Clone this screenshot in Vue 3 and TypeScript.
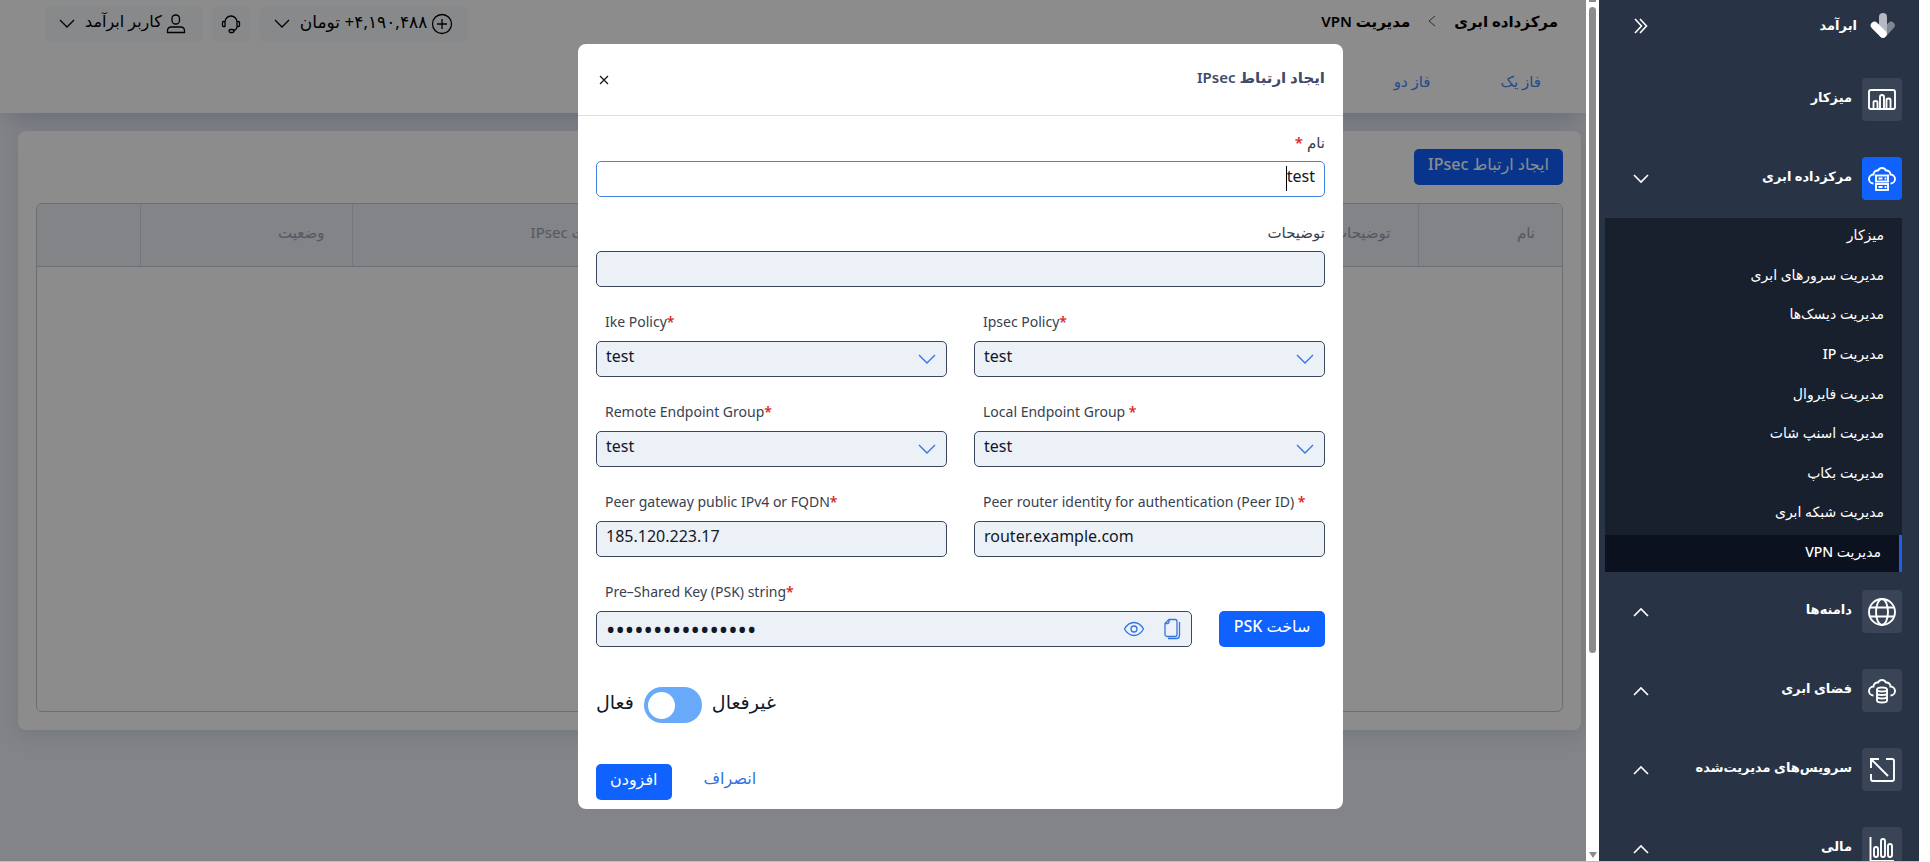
<script setup lang="ts">
import { ref } from 'vue'

type IconName = 'desk' | 'cloudServer' | 'globe' | 'cloudStorage' | 'managed' | 'finance'

interface MenuItem {
  label: string
  icon: IconName
  active?: boolean
  expandable?: boolean
  children?: string[]
}

const menu: MenuItem[] = [
  { label: 'میزکار', icon: 'desk' },
  {
    label: 'مرکزداده ابری',
    icon: 'cloudServer',
    active: true,
    expandable: true,
    children: [
      'میزکار',
      'مدیریت سرورهای ابری',
      'مدیریت دیسک‌ها',
      'مدیریت IP',
      'مدیریت فایروال',
      'مدیریت اسنپ شات',
      'مدیریت بکاپ',
      'مدیریت شبکه ابری',
      'مدیریت VPN',
    ],
  },
  { label: 'دامنه‌ها', icon: 'globe', expandable: true },
  { label: 'فضای ابری', icon: 'cloudStorage', expandable: true },
  { label: 'سرویس‌های مدیریت‌شده', icon: 'managed', expandable: true },
  { label: 'مالی', icon: 'finance', expandable: true },
]
const currentPage = 'مدیریت VPN'

const name = ref('test')
const description = ref('')
const ikePolicy = ref('test')
const ipsecPolicy = ref('test')
const remoteGroup = ref('test')
const localGroup = ref('test')
const peerGateway = ref('185.120.223.17')
const peerId = ref('router.example.com')
const psk = ref('abcdefgh12345678')
const pskVisible = ref(false)
const disabled = ref(false)
</script>

<template>
  <div class="app" dir="rtl">
    <aside class="sidebar">
      <div class="brand">
        <svg class="brand-logo" viewBox="0 0 26 26" aria-hidden="true">
          <path d="M21 12.500L13 21" stroke="#7f8794" stroke-width="7.500" stroke-linecap="round" />
          <path d="M13 4v15" stroke="#b5b9c1" stroke-width="8" stroke-linecap="round" />
          <path d="M4.500 12.500L13 21" stroke="#fff" stroke-width="7.500" stroke-linecap="round" />
        </svg>
        <span class="brand-name">ابرآمد</span>
        <button class="plain collapse" type="button" aria-label="جمع کردن منو">
          <svg viewBox="0 0 16 18" width="16" height="18">
            <path d="M2 2l6.500 7L2 16M7 2l6.500 7L7 16" />
          </svg>
        </button>
      </div>
      <nav>
        <div v-for="item in menu" :key="item.label" class="menu-group">
          <button class="plain menu-item" type="button">
            <span class="menu-icon" :class="{ active: item.active }">
              <svg v-if="item.icon === 'desk'" viewBox="0 0 30 30">
                <rect x="2" y="5" width="26" height="19" rx="2" />
                <path d="M6.500 23v-5.500q0-1.500 2-1.500t2 1.500V23M13 23V12q0-2 2-2t2 2v11M19.500 23v-8q0-1.500 2-1.500t2 1.500v8" />
              </svg>
              <svg v-else-if="item.icon === 'cloudServer'" viewBox="0 0 30 30">
                <path d="M6.500 19.500a4.500 4.500 0 0 1 0-9a4 4 0 0 1 4.500-4a4.500 4.500 0 0 1 8 0a4 4 0 0 1 4.500 4a4.500 4.500 0 0 1 0 9" />
                <rect x="9" y="11.500" width="12" height="6" />
                <rect x="9" y="20" width="12" height="6" />
                <path d="M11.500 14.500h4M18.500 13.500v2M11.500 23h4M18.500 22v2" />
              </svg>
              <svg v-else-if="item.icon === 'globe'" viewBox="0 0 30 30">
                <circle cx="15" cy="15" r="13" />
                <ellipse cx="15" cy="15" rx="6" ry="13" />
                <path d="M3 10.500h24M3 19.500h24" />
              </svg>
              <svg v-else-if="item.icon === 'cloudStorage'" viewBox="0 0 30 30">
                <path d="M6.500 19.500a4.500 4.500 0 0 1 0-9a4 4 0 0 1 4.500-4a4.500 4.500 0 0 1 8 0a4 4 0 0 1 4.500 4a4.500 4.500 0 0 1 0 9" />
                <ellipse cx="15" cy="13.500" rx="5" ry="2" />
                <path d="M10 13.500v11c0 2.600 10 2.600 10 0v-11M10 17c0 2.600 10 2.600 10 0M10 20.500c0 2.600 10 2.600 10 0" />
              </svg>
              <svg v-else-if="item.icon === 'managed'" viewBox="0 0 30 30">
                <path d="M4 13V4h8M4 4l17 17M19 4h6a2 2 0 0 1 2 2v18a2 2 0 0 1-2 2H6a2 2 0 0 1-2-2v-5" />
              </svg>
              <svg v-else viewBox="0 0 30 30">
                <path d="M3.500 3v24H27" />
                <rect x="7" y="13" width="4" height="10" rx="2" />
                <rect x="14" y="5" width="4" height="18" rx="2" />
                <rect x="21" y="10" width="4" height="13" rx="2" />
              </svg>
            </span>
            <span class="menu-label">{{ item.label }}</span>
            <svg v-if="item.expandable" class="menu-chevron" viewBox="0 0 18 12">
              <path v-if="item.children" d="M2 2l7 7 7-7" />
              <path v-else d="M2 10l7-7 7 7" />
            </svg>
          </button>
          <ul v-if="item.children" class="submenu">
            <li v-for="child in item.children" :key="child">
              <a href="#" :class="{ current: child === currentPage }">{{ child }}</a>
            </li>
          </ul>
        </div>
      </nav>
    </aside>

    <div class="scroll-track" aria-hidden="true">
      <span class="scroll-cap"></span>
      <span class="scroll-thumb"></span>
      <span class="scroll-arrow"></span>
    </div>

    <main class="main">
      <header class="topbar">
        <div class="topbar-row">
          <div class="crumbs">
            <a href="#">مرکزداده ابری</a>
            <svg viewBox="0 0 8 12" width="8" height="12"><path d="M7 1L1 6l6 5" /></svg>
            <a href="#">مدیریت VPN</a>
          </div>
          <div class="tools">
            <button class="pill credit" type="button">
              <svg viewBox="0 0 22 22" width="22" height="22">
                <circle cx="11" cy="11" r="9.500" />
                <path d="M11 6v10M6 11h10" />
              </svg>
              <span>۴,۱۹۰,۴۸۸+ تومان</span>
              <svg class="pill-chevron" viewBox="0 0 16 10" width="16" height="10"><path d="M1 1l7 7 7-7" /></svg>
            </button>
            <button class="pill" type="button" aria-label="پشتیبانی">
              <svg viewBox="0 0 20 20" width="20" height="20">
                <path d="M4 13V8a6 6 0 0 1 12 0v5a5 5 0 0 1-4 4M4 7.500H2.500a1 1 0 0 0-1 1v3a1 1 0 0 0 1 1H4M16 7.500h1.500a1 1 0 0 1 1 1v3a1 1 0 0 1-1 1H16" />
                <rect x="8" y="15.500" width="5" height="3" rx="1.500" />
              </svg>
            </button>
            <button class="pill user" type="button">
              <svg viewBox="0 0 20 20" width="20" height="20">
                <rect x="6" y="1" width="7.500" height="9" rx="3.500" />
                <path d="M1.500 18.500v-2a3.500 3.500 0 0 1 3.500-3.500h10a3.500 3.500 0 0 1 3.500 3.500v2z" />
              </svg>
              <span>کاربر ابرآمد</span>
              <svg class="pill-chevron" viewBox="0 0 16 10" width="16" height="10"><path d="M1 1l7 7 7-7" /></svg>
            </button>
          </div>
        </div>
        <nav class="tabs">
          <a href="#">فاز یک</a>
          <a href="#">فاز دو</a>
        </nav>
      </header>

      <section class="card">
        <button class="primary" type="button">ایجاد ارتباط IPsec</button>
        <div class="table-box">
          <table>
            <thead>
              <tr>
                <th class="col-name">نام</th>
                <th>توضیحات</th>
                <th class="col-ipsec">سیاست IPsec</th>
                <th class="col-status">وضعیت</th>
                <th class="col-actions"></th>
              </tr>
            </thead>
          </table>
        </div>
      </section>
      <div class="scrim"></div>
    </main>

    <div class="dialog-layer">
      <form class="dialog" role="dialog" aria-labelledby="dialog-title" @submit.prevent>
        <header class="dialog-head">
          <h2 id="dialog-title">ایجاد ارتباط IPsec</h2>
          <button class="plain close" type="button" aria-label="بستن">
            <svg viewBox="0 0 10 10" width="10" height="10"><path d="M1 1l8 8M9 1L1 9" /></svg>
          </button>
        </header>

        <div class="dialog-body">
          <div class="field">
            <label for="vpn-name">نام <b>*</b></label>
            <div class="control">
              <input id="vpn-name" v-model="name" class="focused" type="text" />
              <span class="caret"></span>
            </div>
          </div>
          <div class="field">
            <label for="vpn-desc">توضیحات</label>
            <div class="control"><input id="vpn-desc" v-model="description" type="text" /></div>
          </div>

          <div class="pairs" dir="ltr">
            <div class="field">
              <label for="ike">Ike Policy<b>*</b></label>
              <div class="control">
                <select id="ike" v-model="ikePolicy"><option>test</option></select>
                <svg class="select-chevron" viewBox="0 0 18 10"><path d="M1 1l8 8 8-8" /></svg>
              </div>
            </div>
            <div class="field">
              <label for="ipsec">Ipsec Policy<b>*</b></label>
              <div class="control">
                <select id="ipsec" v-model="ipsecPolicy"><option>test</option></select>
                <svg class="select-chevron" viewBox="0 0 18 10"><path d="M1 1l8 8 8-8" /></svg>
              </div>
            </div>
            <div class="field">
              <label for="remote">Remote Endpoint Group<b>*</b></label>
              <div class="control">
                <select id="remote" v-model="remoteGroup"><option>test</option></select>
                <svg class="select-chevron" viewBox="0 0 18 10"><path d="M1 1l8 8 8-8" /></svg>
              </div>
            </div>
            <div class="field">
              <label for="local">Local Endpoint Group <b>*</b></label>
              <div class="control">
                <select id="local" v-model="localGroup"><option>test</option></select>
                <svg class="select-chevron" viewBox="0 0 18 10"><path d="M1 1l8 8 8-8" /></svg>
              </div>
            </div>
            <div class="field">
              <label for="gateway">Peer gateway public IPv4 or FQDN<b>*</b></label>
              <div class="control"><input id="gateway" v-model="peerGateway" type="text" /></div>
            </div>
            <div class="field">
              <label for="peer-id">Peer router identity for authentication (Peer ID) <b>*</b></label>
              <div class="control"><input id="peer-id" v-model="peerId" type="text" /></div>
            </div>
          </div>

          <div class="psk-row" dir="ltr">
            <div class="field">
              <label for="psk">Pre–Shared Key (PSK) string<b>*</b></label>
              <div class="control">
                <input id="psk" v-model="psk" :type="pskVisible ? 'text' : 'password'" autocomplete="off" />
                <div class="psk-actions">
                  <button class="plain" type="button" aria-label="نمایش" @click="pskVisible = !pskVisible">
                    <svg viewBox="0 0 22 18" width="22" height="18">
                      <path d="M1.500 9C4 4.500 7 2.500 11 2.500S18 4.500 20.500 9C18 13.500 15 15.500 11 15.500S4 13.500 1.500 9z" />
                      <circle cx="11" cy="9" r="3" />
                    </svg>
                  </button>
                  <button class="plain" type="button" aria-label="کپی">
                    <svg viewBox="0 0 18 22" width="18" height="22">
                      <path d="M6 1.500h6a2 2 0 0 1 2 2v13a2 2 0 0 1-2 2H4a2 2 0 0 1-2-2v-11zM6 1.500v2.500a1.500 1.500 0 0 1-1.500 1.500H2M16.500 4v13.500a3 3 0 0 1-3 3H5" />
                    </svg>
                  </button>
                </div>
              </div>
            </div>
            <button class="primary psk-create" type="button" dir="rtl">ساخت PSK</button>
          </div>

          <label class="switch" dir="ltr">
            <span>فعال</span>
            <input v-model="disabled" type="checkbox" role="switch" />
            <span>غیرفعال</span>
          </label>

          <footer class="actions" dir="ltr">
            <button class="primary" type="submit">افزودن</button>
            <button class="plain cancel" type="button">انصراف</button>
          </footer>
        </div>
      </form>
    </div>
  </div>
</template>

<style>
html,
body,
#app {
  height: 100%;
}
body {
  margin: 0;
  background: #fff;
  overflow: hidden;
}
</style>

<style scoped>
.app,
.app * {
  box-sizing: border-box;
}
.app {
  position: relative;
  display: flex;
  height: 100%;
  margin-right: 11px;
  overflow: hidden;
  border-bottom: 1px solid #b4bfc2;
  font-family: 'Noto Sans', 'DejaVu Sans', sans-serif;
  font-size: 16px;
  color: #111827;
}
button,
input,
select {
  font: inherit;
  color: inherit;
}
a {
  color: inherit;
  text-decoration: none;
}
svg {
  display: block;
  flex: none;
  fill: none;
  stroke: currentColor;
  stroke-width: 1.300;
}
.plain {
  padding: 0;
  border: 0;
  background: none;
  cursor: pointer;
}

/* Sidebar */
.sidebar {
  flex: none;
  width: 320px;
  padding-right: 17px;
  overflow: hidden;
  background: #283345;
  color: #fff;
  font-size: 13px;
  font-weight: 700;
}
.brand {
  display: flex;
  align-items: center;
  height: 60px;
  padding: 0 6px 9px 30px;
}
.brand-logo {
  width: 26px;
  height: 26px;
}
.brand-name {
  flex: 1;
  margin-right: 13px;
  padding-bottom: 2px;
  line-height: 20px;
}
.collapse {
  width: 24px;
  color: #fff;
}
.collapse svg {
  margin: auto;
  stroke-width: 1.600;
}
.menu-item {
  display: flex;
  align-items: center;
  width: 100%;
  padding: 18px 0;
  padding-left: 33px;
  text-align: right;
  color: #fff;
}
.menu-icon {
  display: grid;
  place-items: center;
  width: 40px;
  height: 43px;
  border-radius: 4px;
  background: #3a4457;
}
.menu-icon.active {
  background: #0f62fe;
}
.menu-icon svg {
  width: 30px;
  height: 30px;
  stroke-width: 1.900;
}
.menu-label {
  flex: 1;
  margin-right: 10px;
  padding-bottom: 5px;
  line-height: 20px;
}
.menu-chevron {
  width: 18px;
  height: 12px;
  stroke-width: 1.600;
}
.submenu {
  display: flex;
  flex-direction: column;
  justify-content: space-between;
  height: 354px;
  margin: 0 0 0 6px;
  padding: 0;
  list-style: none;
  background: #19202d;
}
.submenu a {
  display: block;
  height: 37px;
  padding-right: 18px;
  line-height: 34px;
  font-size: 14px;
  font-weight: 500;
}
.submenu .current {
  border-right: 3px solid #1f5eea;
  background: #0b111e;
}

/* Scrollbar strip */
.scroll-track {
  flex: none;
  display: flex;
  flex-direction: column;
  align-items: center;
  width: 13px;
  background: #fff;
}
.scroll-cap {
  width: 7px;
  height: 2px;
  margin-bottom: 5px;
  background: #8b8b8b;
}
.scroll-thumb {
  width: 7px;
  height: 75%;
  border-radius: 4px;
  background: #8b8b8b;
}
.scroll-arrow {
  margin: auto 0 3px;
  border: 4px solid transparent;
  border-top: 6px solid #8b8b8b;
  border-bottom: 0;
}

/* Page */
.main {
  position: relative;
  flex: 1;
  min-width: 0;
  overflow: hidden;
  background: #edf0f6;
}
.scrim {
  position: absolute;
  inset: 0;
  background: rgba(0, 0, 0, 0.45);
}
.topbar {
  height: 113px;
  padding: 6px 28px 0 45px;
  background: #fff;
  box-shadow: 0 12px 24px -6px #bcc5da;
}
.topbar-row {
  display: flex;
  justify-content: space-between;
  height: 36px;
}
.crumbs {
  display: flex;
  gap: 18px;
  height: 30px;
  align-items: center;
  color: #000;
  font-weight: 600;
  font-size: 15px;
}
.crumbs svg {
  stroke: #4b5563;
  stroke-width: 1;
}
.tools {
  display: flex;
  gap: 9px;
}
.pill {
  display: flex;
  align-items: center;
  padding: 0 9px;
  border: 0;
  border-radius: 6px;
  background: #f7fafd;
  color: #000;
}
.pill span {
  margin-right: 4px;
  padding-bottom: 6px;
}
.credit {
  padding: 0 15px;
  font-size: 17px;
}
.user {
  padding: 0 17px 0 14px;
}
.pill-chevron {
  margin-right: 10px;
}
.tabs {
  display: flex;
  gap: 70px;
  padding: 27px 17px 0 0;
  line-height: 24px;
  font-size: 15px;
  color: #4688ff;
}
.card {
  position: relative;
  margin: 18px 5px 0 18px;
  padding: 18px;
  border-radius: 8px;
  background: #fff;
  box-shadow: 0 4px 20px #d0d6e4;
}
.primary {
  display: block;
  height: 36px;
  padding: 0 14px 6px;
  border: 0;
  border-radius: 5px;
  background: #0f62fe;
  color: #fff;
  font-weight: 500;
}
.table-box {
  height: 509px;
  margin-top: 18px;
  overflow: hidden;
  border: 1px solid #c4cad6;
  border-radius: 6px;
}
table {
  width: 100%;
  table-layout: fixed;
  border-collapse: collapse;
}
th {
  height: 62px;
  padding: 0 27px 5px;
  border-bottom: 1px solid #c4cad6;
  border-left: 1px solid #d3d9e3;
  background: #edf0f6;
  color: #97a3b5;
  font-size: 15px;
  font-weight: 400;
  text-align: right;
}
th:last-child {
  border-left: 0;
}
.col-name {
  width: 144px;
}
.col-ipsec {
  width: 296px;
}
.col-status {
  width: 212px;
}
.col-actions {
  width: 103px;
}

/* Dialog */
.dialog-layer {
  position: absolute;
  inset: 0 0 0 2px;
  display: flex;
  align-items: flex-start;
  justify-content: center;
  padding-top: 44px;
  pointer-events: none;
}
.dialog {
  width: 765px;
  max-width: 100%;
  border-radius: 8px;
  background: #fff;
  pointer-events: auto;
}
.dialog-head {
  display: flex;
  align-items: center;
  justify-content: space-between;
  height: 72px;
  padding: 0 18px 0 19px;
  border-bottom: 1px solid #d8e0e4;
}
.dialog-head h2 {
  margin: 0;
  padding-bottom: 6px;
  font-size: 15px;
  font-weight: 600;
  color: #3f4b69;
}
.close {
  width: 14px;
}
.close svg {
  margin: auto;
}
.dialog-body {
  padding: 17px 18px 9px;
}
.field {
  min-width: 0;
}
.field label {
  display: block;
  height: 28px;
  line-height: 18px;
  font-size: 15px;
  color: #374151;
  white-space: nowrap;
}
.field b {
  color: #dc2626;
  font-weight: 600;
}
[dir='ltr'] .field label {
  padding-left: 9px;
  font-size: 14px;
}
.control {
  position: relative;
  margin-bottom: 26px;
}
.control input,
.control select {
  display: block;
  width: 100%;
  height: 36px;
  margin: 0;
  padding: 0 9px 6px;
  border: 1px solid #3b475c;
  border-radius: 5px;
  outline: 0;
  appearance: none;
  background: #ecf1f8;
}
.control input.focused {
  border-color: #3f83dc;
  background: #fff;
  caret-color: transparent;
}
.control input[type='password'] {
  padding-bottom: 0;
  font-size: 25px;
}
.caret {
  position: absolute;
  top: 5px;
  right: 38px;
  width: 1px;
  height: 25px;
  background: #000;
}
.select-chevron {
  position: absolute;
  top: 13px;
  right: 11px;
  width: 18px;
  height: 10px;
  color: #3575e2;
  stroke-width: 1.400;
  pointer-events: none;
}
.pairs {
  display: grid;
  grid-template-columns: 1fr 1fr;
  column-gap: 27px;
}
.psk-row {
  display: grid;
  grid-template-columns: 1fr 106px;
  column-gap: 27px;
}
.psk-create {
  margin-top: 28px;
  padding: 0 0 6px;
}
.psk-actions {
  position: absolute;
  top: 0;
  right: 11px;
  height: 36px;
  display: flex;
  align-items: center;
  gap: 18px;
}
.psk-actions .plain {
  color: #3575e2;
}
.switch {
  display: flex;
  align-items: center;
  gap: 10px;
  height: 36px;
  margin-top: 14px;
  font-size: 19px;
}
.switch span {
  padding-bottom: 7px;
}
.switch input {
  display: flex;
  align-items: center;
  width: 58px;
  height: 36px;
  margin: 0;
  padding: 0 4px;
  appearance: none;
  border-radius: 18px;
  background: #68aaf9;
}
.switch input::before {
  content: '';
  width: 27px;
  height: 27px;
  border-radius: 50%;
  background: #fff;
}
.switch input:checked::before {
  margin-left: auto;
}
.actions {
  display: flex;
  gap: 32px;
  margin-top: 41px;
}
.cancel {
  padding-bottom: 8px;
  color: #2f71e0;
}
</style>
